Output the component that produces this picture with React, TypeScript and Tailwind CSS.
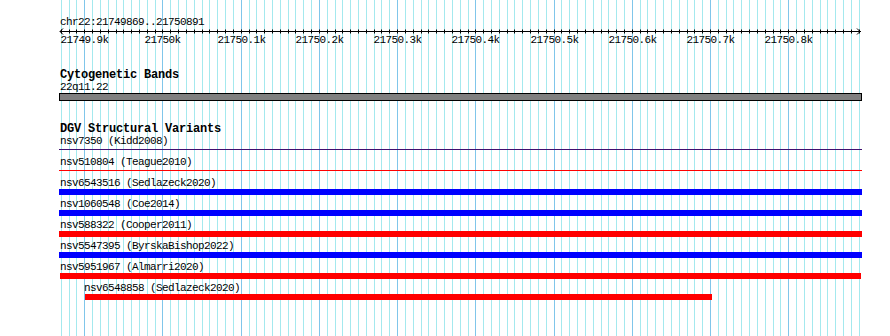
import React from 'react';

const START = 21749869;
const END = 21750891;
const PX_PER_BP = 0.7822;
const PANEL_W = 803;

const xOf = (b: number) => 1 + (b - START) * PX_PER_BP;

type Variant = {
  label: string;
  kind: 'line' | 'bar';
  color: string;
  left: number;
  width: number;
};

const variants: Variant[] = [
  { label: 'nsv7350 (Kidd2008)', kind: 'line', color: '#3f1070', left: 0, width: PANEL_W },
  { label: 'nsv510804 (Teague2010)', kind: 'line', color: '#ff0000', left: 0, width: PANEL_W },
  { label: 'nsv6543516 (Sedlazeck2020)', kind: 'bar', color: '#0000ff', left: 0, width: PANEL_W },
  { label: 'nsv1060548 (Coe2014)', kind: 'bar', color: '#0000ff', left: 0, width: PANEL_W },
  { label: 'nsv588322 (Cooper2011)', kind: 'bar', color: '#ff0000', left: 0, width: PANEL_W },
  { label: 'nsv5547395 (ByrskaBishop2022)', kind: 'bar', color: '#0000ff', left: 0, width: PANEL_W },
  { label: 'nsv5951967 (Almarri2020)', kind: 'bar', color: '#ff0000', left: 1, width: 801 },
  { label: 'nsv6548858 (Sedlazeck2020)', kind: 'bar', color: '#ff0000', left: 26, width: 627 },
];

// every 10 bp a minor line, every 100 bp a major one
const ticks: { x: number; major: boolean; bp: number }[] = [];
for (let b = 21749870; b < END; b += 10) {
  ticks.push({ x: Math.round(xOf(b)) + 0.5, major: b % 100 === 0, bp: b });
}

function Grid() {
  return (
    <svg className="absolute inset-0 h-full w-full" aria-hidden>
      {ticks.map((t) => (
        <line
          key={t.bp}
          x1={t.x}
          x2={t.x}
          y1={0}
          y2={336}
          stroke={t.major ? '#80c6ea' : '#a4e9ee'}
          strokeWidth={1}
        />
      ))}
    </svg>
  );
}

function Ruler() {
  return (
    <>
      <svg className="block h-[5px] w-full overflow-visible" aria-hidden>
        <line x1={1} x2={802} y1={2.5} y2={2.5} stroke="#000" />
        {ticks.map((t) => (
          <line key={t.bp} x1={t.x} x2={t.x} y1={0.5} y2={4.5} stroke="#000" />
        ))}
        <polyline points="4,-0.5 1,2.5 4,5.5" fill="none" stroke="#000" />
        <polyline points="798,-0.5 801,2.5 798,5.5" fill="none" stroke="#000" />
      </svg>
      <div className="relative h-[13px]">
        {ticks
          .filter((t) => t.major)
          .map((t) => (
            <span
              key={t.bp}
              className="absolute top-0 -translate-x-1/2 whitespace-nowrap"
              style={{ left: t.x }}
            >
              {`${t.bp / 1000}k`}
            </span>
          ))}
      </div>
    </>
  );
}

export default function App() {
  return (
    <div className="h-[336px] w-[890px] overflow-hidden bg-white font-['Liberation_Mono',monospace] text-[11px] leading-[13px] tracking-[-0.6px] text-black">
      <div className="relative ml-[59px] h-full w-[803px]">
        <Grid />
        <div className="relative">
          {/* header + scale */}
          <div className="pt-[16px]">
            <div className="pl-px">chr22:21749869..21750891</div>
            <Ruler />
          </div>

          {/* cytogenetic bands */}
          <div className="mt-[20px]">
            <h3 className="h-[13px] pl-px text-[12px] font-bold leading-[16px] tracking-[-0.2px]">Cytogenetic Bands</h3>
            <div className="h-[13px] pl-px leading-[14px]">22q11.22</div>
            <div className="h-[8px] border border-black bg-[#808080]" />
          </div>

          {/* DGV track */}
          <div className="mt-[21px]">
            <h3 className="h-[13px] pl-px text-[12px] font-bold leading-[15px] tracking-[-0.2px]">DGV Structural Variants</h3>
            {variants.map((v) => (
              <div key={v.label} className="h-[21px]">
                <div className="h-[12px] leading-[12px] whitespace-nowrap" style={{ paddingLeft: v.left === 26 ? 25 : 1 }}>
                  {v.label}
                </div>
                <div className="h-[9px]">
                  {v.kind === 'line' ? (
                    <div className="mt-[2px] h-px" style={{ marginLeft: v.left, width: v.width, backgroundColor: v.color }} />
                  ) : (
                    <div className="h-[6px]" style={{ marginLeft: v.left, width: v.width, backgroundColor: v.color }} />
                  )}
                </div>
              </div>
            ))}
          </div>
        </div>
      </div>
    </div>
  );
}
